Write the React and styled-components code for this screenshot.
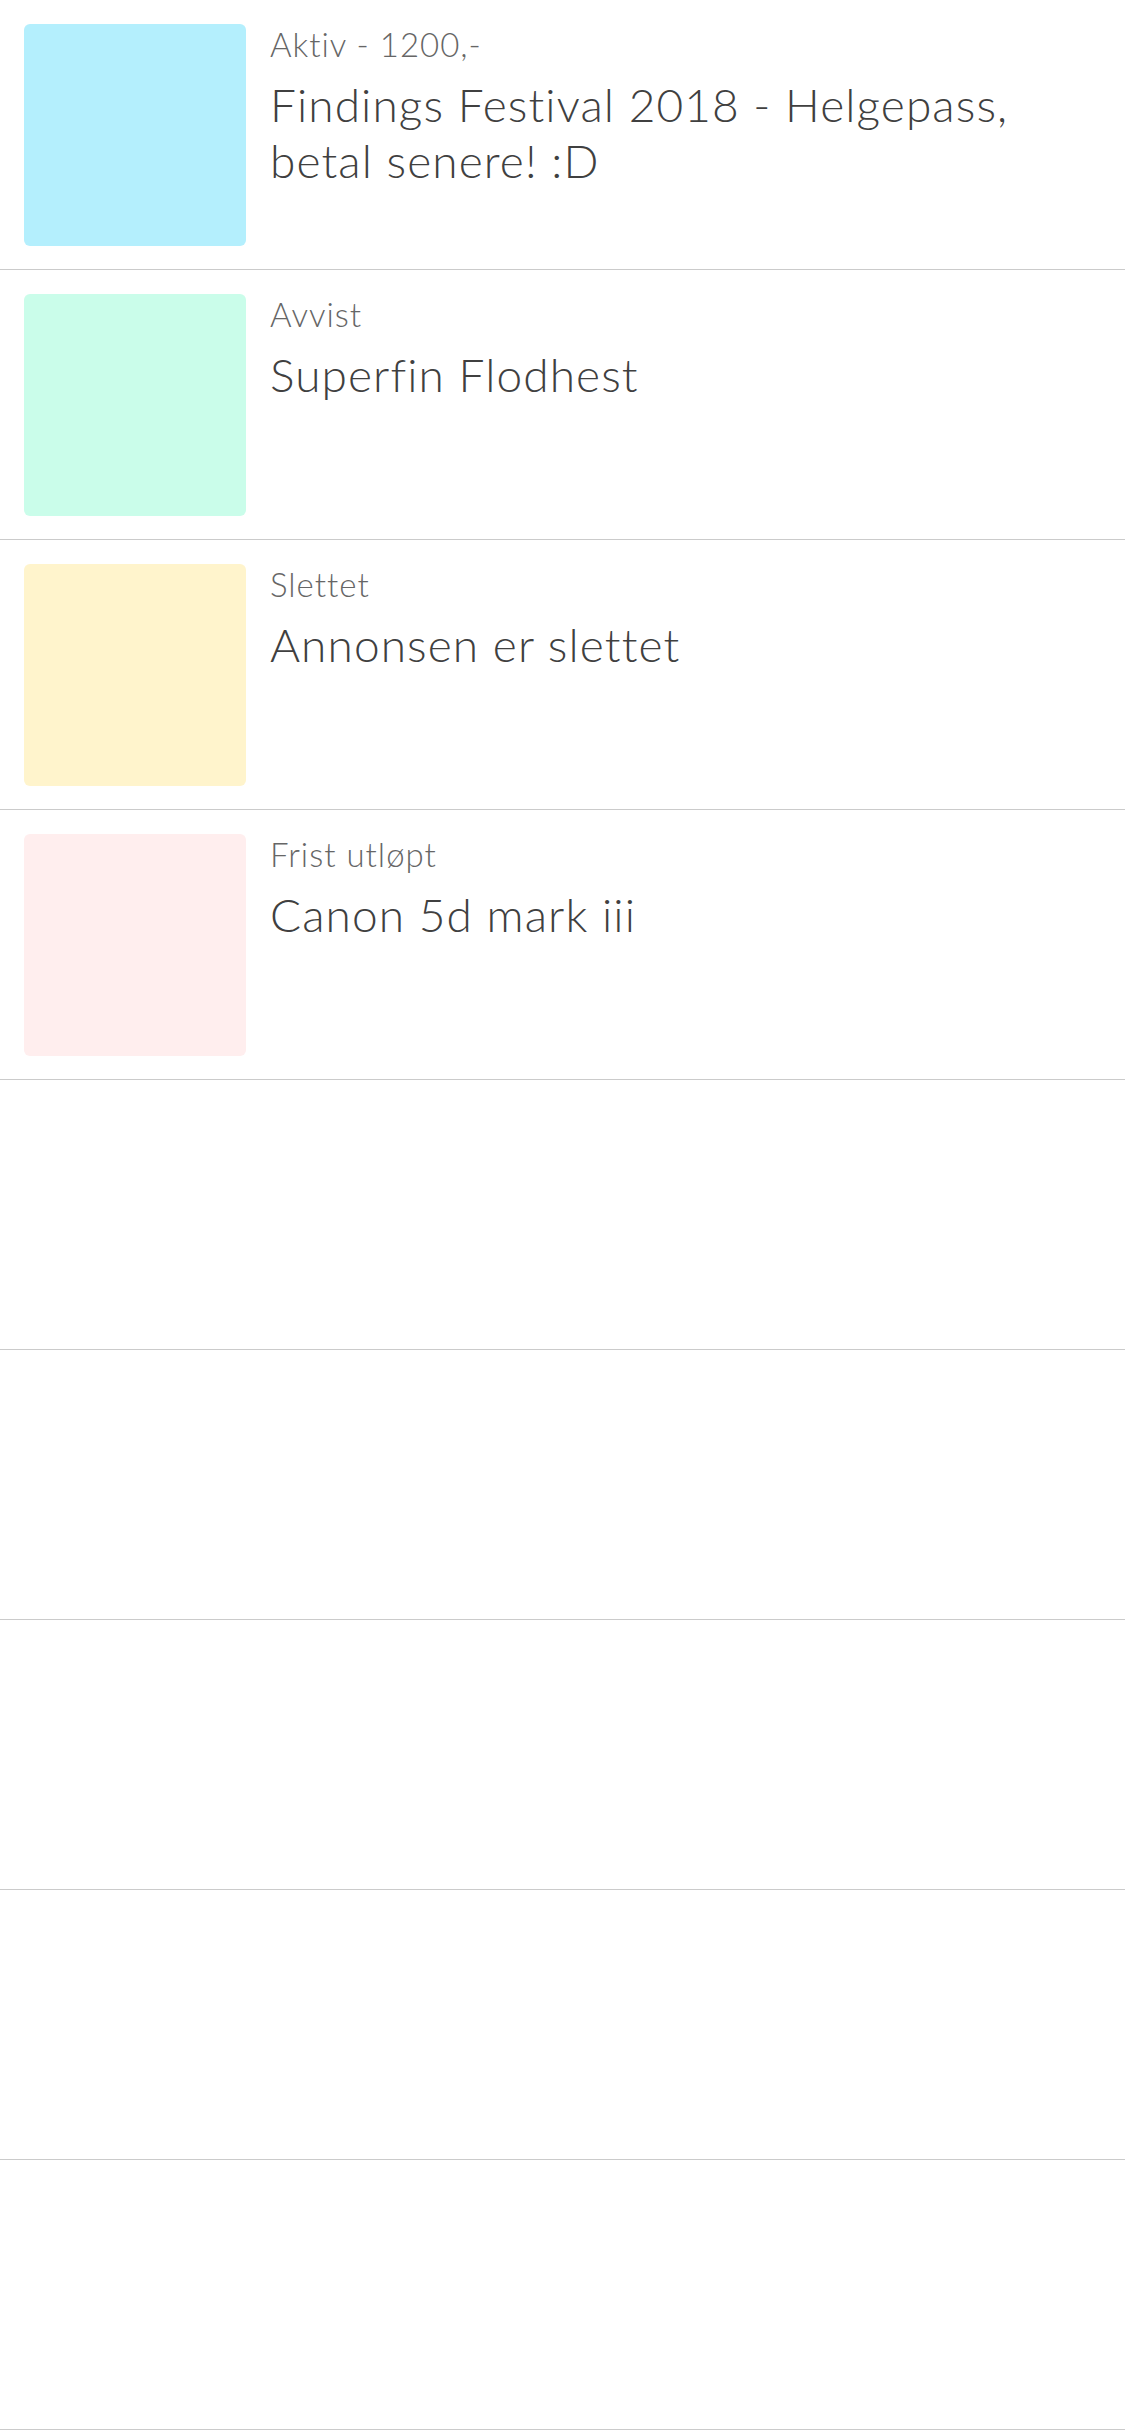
import styled, { createGlobalStyle } from 'styled-components'

const GlobalStyle = createGlobalStyle`
  html, body {
    margin: 0;
    padding: 0;
    background: #fff;
  }
  body {
    font-family: Lato, "Open Sans", sans-serif;
    -webkit-font-smoothing: antialiased;
  }
`

const ads = [
  { status: 'Aktiv - 1200,-', title: 'Findings Festival 2018 - Helgepass, betal senere! :D', color: '#b4effd' },
  { status: 'Avvist', title: 'Superfin Flodhest', color: '#cafdea' },
  { status: 'Slettet', title: 'Annonsen er slettet', color: '#fff4cc' },
  { status: 'Frist utløpt', title: 'Canon 5d mark iii', color: '#ffeeee' },
]

const EMPTY_ROWS = 5

const List = styled.ul`
  list-style: none;
  margin: 0;
  padding: 0;
`

const Row = styled.li`
  box-sizing: border-box;
  height: 270px;
  display: flex;
  align-items: flex-start;
  gap: 24px;
  padding: 24px 40px 0 24px;
  border-bottom: 1px solid #cbcbcb;
`

const Thumb = styled.div`
  flex: 0 0 222px;
  height: 222px;
  border-radius: 6px;
  background: ${props => props.$color};
`

const Info = styled.div`
  flex: 1;
  min-width: 0;
  display: flex;
  flex-direction: column;
`

const Status = styled.span`
  font-size: 33px;
  line-height: 40px;
  font-weight: 300;
  letter-spacing: 1px;
  color: #666;
`

const Title = styled.h2`
  margin: 13px 0 0;
  font-size: 46px;
  line-height: 56px;
  font-weight: 300;
  letter-spacing: 1.1px;
  color: #404040;
`

export default function App() {
  return (
    <>
      <GlobalStyle />
      <List>
        {ads.map(ad => (
          <Row key={ad.title}>
            <Thumb $color={ad.color} />
            <Info>
              <Status>{ad.status}</Status>
              <Title>{ad.title}</Title>
            </Info>
          </Row>
        ))}
        {Array.from({ length: EMPTY_ROWS }, (_, i) => (
          <Row key={'empty-' + i} />
        ))}
      </List>
    </>
  )
}
